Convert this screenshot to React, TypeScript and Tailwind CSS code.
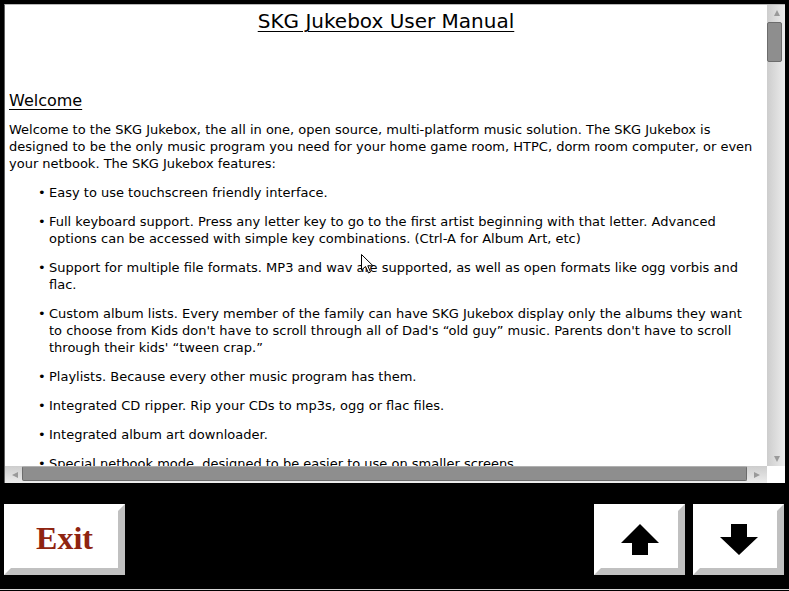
import React from "react";

const items: React.ReactNode[] = [
  "Easy to use touchscreen friendly interface.",
  "Full keyboard support. Press any letter key to go to the first artist beginning with that letter. Advanced options can be accessed with simple key combinations. (Ctrl-A for Album Art, etc)",
  "Support for multiple file formats. MP3 and wav are supported, as well as open formats like ogg vorbis and flac.",
  "Custom album lists. Every member of the family can have SKG Jukebox display only the albums they want to choose from Kids don't have to scroll through all of Dad's \u201cold guy\u201d music. Parents don't have to scroll through their kids' \u201ctween crap.\u201d",
  "Playlists. Because every other music program has them.",
  "Integrated CD ripper. Rip your CDs to mp3s, ogg or flac files.",
  "Integrated album art downloader.",
  "Special netbook mode, designed to be easier to use on smaller screens.",
];

function Tri({ dir }: { dir: "up" | "down" | "left" | "right" }) {
  const pts =
    dir === "up"
      ? "3,0 6,6 0,6"
      : dir === "down"
      ? "0,0 6,0 3,6"
      : dir === "left"
      ? "6,0 6,6 0,3"
      : "0,0 6,3 0,6";
  return (
    <svg width="6" height="6" viewBox="0 0 6 6" className="block">
      <polygon points={pts} fill="#9a9a9a" />
    </svg>
  );
}

function BevelButton({ className, children }: { className: string; children: React.ReactNode }) {
  return (
    <div
      className={`h-[71px] bg-white border-[7px] border-t-white border-l-white border-r-[#c0c0c0] border-b-[#c0c0c0] flex items-center justify-center ${className}`}
    >
      {children}
    </div>
  );
}

export default function App() {
  return (
    <div className="w-[789px] h-[591px] bg-black overflow-hidden relative font-['DejaVu_Sans',sans-serif] text-black">
      <div className="pt-[4px] pl-[4px]">
        <div className="w-[781px] h-[479px] bg-white border-t border-l border-t-[#b8b8b8] border-l-[#606060] flex flex-col">
          <div className="flex h-[461px]">
            <div className="w-[762px] h-[461px] overflow-hidden pl-[4px] pr-[10px]">
              <h1 className="text-center text-[20px] leading-[24px] pt-[4px] pl-[6px] underline underline-offset-[3px] decoration-1">
                SKG Jukebox User Manual
              </h1>
              <h2 className="mt-[58px] text-[16px] leading-[20px] underline underline-offset-[3px] decoration-1">
                Welcome
              </h2>
              <p className="mt-[10px] text-[13px] leading-[17px]">
                Welcome to the SKG Jukebox, the all in one, open source, multi-platform music solution. The SKG Jukebox is
                designed to be the only music program you need for your home game room, HTPC, dorm room computer, or even
                your netbook. The SKG Jukebox features:
              </p>
              <div className="flex flex-col gap-[12px] mt-[12px] text-[13px] leading-[17px]">
                {items.map((t, i) => (
                  <div key={i} className="flex pl-[29px]">
                    <span className="w-[11px] shrink-0">{"\u2022"}</span>
                    <span className="flex-1">{t}</span>
                  </div>
                ))}
              </div>
            </div>
            <div className="w-[18px] h-[461px] bg-gradient-to-r from-[#cdcdcd] to-[#ececec] flex flex-col items-center">
              <div className="h-[17px] pt-[5px] flex justify-center w-full pl-[2px]">
                <Tri dir="up" />
              </div>
              <div className="w-full flex">
                <div className="w-[15px] h-[40px] bg-[#8e8e8e] border border-[#6c6c6c] rounded-[2px]" />
              </div>
              <div className="flex-1" />
              <div className="h-[17px] pb-[4px] flex items-end justify-center w-full pl-[2px]">
                <Tri dir="down" />
              </div>
            </div>
          </div>
          <div className="flex h-[17px]">
            <div className="w-[762px] h-[17px] bg-gradient-to-b from-[#cdcdcd] to-[#ececec] flex items-center">
              <div className="w-[17px] flex justify-center pl-[2px]">
                <Tri dir="left" />
              </div>
              <div className="w-[725px] h-[15px] self-start bg-[#8e8e8e] border border-[#6c6c6c] border-t-[#b0b0b0] rounded-[2px]" />
              <div className="flex-1 flex justify-center">
                <Tri dir="right" />
              </div>
            </div>
            <div className="w-[18px] h-[17px] bg-white" />
          </div>
        </div>
      </div>

      <div className="mt-[21px] flex pl-[4px] pr-[4px]">
        <BevelButton className="w-[121px]">
          <span className="font-['Liberation_Serif',serif] font-bold text-[32px] leading-none text-[#8f2410] mt-[-3px]">
            Exit
          </span>
        </BevelButton>
        <div className="flex-1" />
        <BevelButton className="w-[91px] mr-[8px]">
          <svg width="38" height="31" viewBox="0 0 38 31" className="block mt-[-1px]">
            <path d="M19 0 L38 19 L27 19 L27 31 L11 31 L11 19 L0 19 Z" fill="#000" />
          </svg>
        </BevelButton>
        <BevelButton className="w-[91px] mr-[1px]">
          <svg width="38" height="31" viewBox="0 0 38 31" className="block mt-[-1px]">
            <path d="M11 0 L27 0 L27 13 L38 13 L19 31 L0 13 L11 13 Z" fill="#000" />
          </svg>
        </BevelButton>
      </div>

      <div className="mt-[14px] h-[1px] bg-[#d8d8d8]" />

      <svg
        width="13"
        height="20"
        viewBox="0 0 13 20"
        className="absolute left-[361px] top-[254px] pointer-events-none"
      >
        <path d="M0.5 0.5 L0.5 16 L4.5 12.5 L7.5 19 L9.5 18 L6.8 11.8 L12 11.8 Z" fill="#fff" stroke="#000" strokeWidth="1" />
      </svg>
    </div>
  );
}
